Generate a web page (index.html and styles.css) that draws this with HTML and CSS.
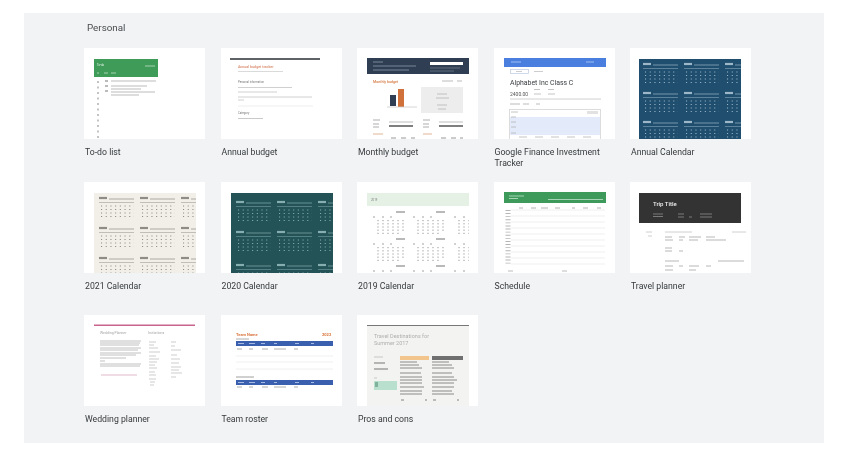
FILE: index.html
```html
<!DOCTYPE html>
<html>
<head>
    <meta charset="UTF-8">
    <title>Template gallery</title>
    <link rel="stylesheet" href="styles.css">
</head>
<body>
<svg class="defs" width="0" height="0">
    <defs>
        <g id="month" fill="none" stroke="currentColor">
            <path d="M1 2h8" stroke-width="2.200"/>
            <path d="M11 3h25" stroke-width="0.700"/>
            <path d="M1 6.500h35" stroke-width="0.500"/>
            <path d="M3 10h33M3 13.500h33M3 17h33M3 20.500h33" stroke-width="1.200" stroke-dasharray="1.100 3.600"/>
        </g>
        <g id="months" fill="none" stroke="currentColor">
            <path d="M24 0h9" stroke-width="1.200"/>
            <path d="M1 5h2M10 5h2M18 5h2" stroke-width="0.800"/>
            <path d="M6 8v15M11 8v15M16 8v15M21 8v15M26 8v15M31 8v11" stroke-width="0.900" stroke-dasharray="1.200 2"/>
        </g>
    </defs>
</svg>
<div class="panel">
    <h1>Personal</h1>
    <div class="grid">

        <!-- row 1 -->
        <div class="item">
            <div class="thumb">
                <svg viewBox="0 0 121 91">
                    <rect x="10" y="11" width="64" height="18" fill="#3f9b58"/>
                    <text x="13" y="18" class="tiny" fill="#e5f4e9">To-do</text>
                    <path d="M13 25h2M20 25h4M27 25h5M61 18h10" stroke="#cfe8d6" stroke-width="0.700" fill="none"/>
                    <path d="M14 33v58" stroke="#c4c4c4" stroke-width="2" stroke-dasharray="2 3.500" fill="none"/>
                    <path d="M21 33h3M21 38h3M21 43h3" stroke="#bbb" stroke-width="2" fill="none"/>
                    <path d="M27 33h45M27 38h36M27 41h30M27 44h44M27 47h28" stroke="#aaa" stroke-width="0.800" fill="none"/>
                </svg>
            </div>
            <div class="label">To-do list</div>
        </div>

        <div class="item">
            <div class="thumb">
                <svg viewBox="0 0 121 91">
                    <rect x="9" y="10" width="90" height="2" fill="#5f6368"/>
                    <text x="17" y="20" class="tiny title" fill="#d9886a">Annual budget tracker</text>
                    <path d="M17 23.500h45" stroke="#d0d0d0" stroke-width="0.800" fill="none"/>
                    <text x="17" y="35" class="tiny" fill="#777">Personal information</text>
                    <path d="M17 39.500h54M17 44h39M17 49h74M17 52h6" stroke="#c4c4c4" stroke-width="0.800" fill="none"/>
                    <path d="M17 58h75" stroke="#eee" fill="none"/>
                    <text x="17" y="66" class="tiny" fill="#777">Category</text>
                    <path d="M17 70.500h25" stroke="#bbb" stroke-width="0.800" fill="none"/>
                </svg>
            </div>
            <div class="label">Annual budget</div>
        </div>

        <div class="item">
            <div class="thumb">
                <svg viewBox="0 0 121 91">
                    <rect x="10" y="10" width="102" height="16" fill="#2f3e53"/>
                    <path d="M16 14h10M16 18h43M16 22h36" stroke="#8d99a9" stroke-width="0.800" fill="none"/>
                    <rect x="73" y="14" width="33" height="3" fill="#fff"/>
                    <path d="M73 20h30M73 23h24" stroke="#6d7a8c" stroke-width="0.800" fill="none"/>
                    <text x="16" y="35" class="tiny title" fill="#d47a43">Monthly budget</text>
                    <path d="M85 33h11M100 33h5" stroke="#aaa" stroke-width="0.800" fill="none"/>
                    <rect x="33" y="47" width="6" height="11" fill="#2f3e53"/>
                    <rect x="41" y="41" width="6" height="18" fill="#d0703a"/>
                    <path d="M30 59h30" stroke="#ccc" stroke-width="0.800" fill="none"/>
                    <rect x="64" y="39" width="42" height="26" fill="#ededed"/>
                    <path d="M80 46h10M79 50h13M80 57h10M81 61h8" stroke="#b5b5b5" stroke-width="0.800" fill="none"/>
                    <path d="M16 72h7M16 76h6M16 79h6M66 72h7M66 76h6M66 79h6" stroke="#999" stroke-width="0.800" fill="none"/>
                    <path d="M32 74h24M82 74h24" stroke="#d4d4d4" stroke-width="1.500" fill="none"/>
                    <path d="M32 78h24M82 78h24" stroke="#555" stroke-width="1.500" fill="none"/>
                    <path d="M16 86h10M66 86h9" stroke="#e6b595" stroke-width="1.200" fill="none"/>
                    <path d="M34 90h5M44 90h5M54 90h4M84 90h5M94 90h5M103 90h3" stroke="#999" stroke-width="1.200" fill="none"/>
                </svg>
            </div>
            <div class="label">Monthly budget</div>
        </div>

        <div class="item">
            <div class="thumb">
                <svg viewBox="0 0 121 91">
                    <rect x="10" y="10" width="102" height="9" fill="#4a7fe0"/>
                    <path d="M17 14h10M92 14h8" stroke="#b8cef5" stroke-width="0.800" fill="none"/>
                    <rect x="16.500" y="21.500" width="18" height="4" fill="#fff" stroke="#c5d0e6" stroke-width="0.800"/>
                    <path d="M22 23.500h6M40 23.500h9" stroke="#c0c0c0" stroke-width="0.800" fill="none"/>
                    <text x="16" y="37" class="name">Alphabet Inc Class C</text>
                    <text x="16" y="48" class="price">2400.00</text>
                    <path d="M40 41.500h6M54 41.500h6M40 46h7M54 46h7" stroke="#b5b5b5" stroke-width="0.800" fill="none"/>
                    <path d="M16 51h91" stroke="#c4c4c4" stroke-width="0.800" fill="none"/>
                    <path d="M16 56h10M29 56h6M42 56h4" stroke="#aaa" stroke-width="0.800" fill="none"/>
                    <rect x="15.500" y="61.500" width="91" height="30" fill="#fff" stroke="#d4d4d4" stroke-width="0.800"/>
                    <rect x="16" y="69" width="90" height="18" fill="#e3eafa"/>
                    <rect x="93" y="63" width="11" height="3" fill="#e2e2e2"/>
                    <path d="M17 64h7M17 69h5M17 74h5M17 79h5M17 85h5M25 89h8M41 89h8M57 89h8M73 89h8M89 89h8" stroke="#b5b5b5" stroke-width="0.800" fill="none"/>
                </svg>
            </div>
            <div class="label">Google Finance Investment Tracker</div>
        </div>

        <div class="item">
            <div class="thumb">
                <svg viewBox="0 0 121 91">
                    <svg class="cal-navy" x="9" y="11" width="102" height="80">
                        <rect width="102" height="80" fill="#1f4e6e"/>
                        <use href="#month" x="3" y="3"/><use href="#month" x="44" y="3"/><use href="#month" x="85" y="3"/>
                        <use href="#month" x="3" y="32"/><use href="#month" x="44" y="32"/><use href="#month" x="85" y="32"/>
                        <use href="#month" x="3" y="61"/><use href="#month" x="44" y="61"/><use href="#month" x="85" y="61"/>
                    </svg>
                </svg>
            </div>
            <div class="label">Annual Calendar</div>
        </div>

        <!-- row 2 -->
        <div class="item">
            <div class="thumb">
                <svg viewBox="0 0 121 91">
                    <svg class="cal-cream" x="10" y="11" width="102" height="80">
                        <rect width="102" height="80" fill="#f1efe8"/>
                        <use href="#month" x="4" y="3"/><use href="#month" x="45" y="3"/><use href="#month" x="86" y="3"/>
                        <use href="#month" x="4" y="33"/><use href="#month" x="45" y="33"/><use href="#month" x="86" y="33"/>
                        <use href="#month" x="4" y="63"/><use href="#month" x="45" y="63"/><use href="#month" x="86" y="63"/>
                    </svg>
                </svg>
            </div>
            <div class="label">2021 Calendar</div>
        </div>

        <div class="item">
            <div class="thumb">
                <svg viewBox="0 0 121 91">
                    <svg class="cal-teal" x="10" y="11" width="102" height="80">
                        <rect width="102" height="80" fill="#235357"/>
                        <use href="#month" x="4" y="7"/><use href="#month" x="45" y="7"/><use href="#month" x="86" y="7"/>
                        <use href="#month" x="4" y="37"/><use href="#month" x="45" y="37"/><use href="#month" x="86" y="37"/>
                        <use href="#month" x="4" y="70"/><use href="#month" x="45" y="70"/><use href="#month" x="86" y="70"/>
                    </svg>
                </svg>
            </div>
            <div class="label">2020 Calendar</div>
        </div>

        <div class="item">
            <div class="thumb">
                <svg viewBox="0 0 121 91">
                    <rect x="10" y="11" width="102" height="13" fill="#e6f1e6"/>
                    <text x="14" y="19" class="tiny" fill="#777">2019</text>
                    <svg class="cal-grey" x="10" y="24" width="102" height="67">
                        <use href="#months" x="5" y="6"/><use href="#months" x="45" y="6"/><use href="#months" x="86" y="6"/>
                        <use href="#months" x="5" y="33"/><use href="#months" x="45" y="33"/><use href="#months" x="86" y="33"/>
                        <use href="#months" x="5" y="60"/><use href="#months" x="45" y="60"/><use href="#months" x="86" y="60"/>
                    </svg>
                </svg>
            </div>
            <div class="label">2019 Calendar</div>
        </div>

        <div class="item">
            <div class="thumb">
                <svg viewBox="0 0 121 91">
                    <rect x="10" y="10" width="102" height="11" fill="#3d9a5b"/>
                    <path d="M15 14h15M15 16.500h9M54 17.500h55" stroke="#bfe3cb" stroke-width="0.800" fill="none"/>
                    <path d="M25 26h4M37 26h5M47 26h7M61 26h5M78 26h3M89 26h5M103 26h4" stroke="#aaa" stroke-width="0.900" fill="none"/>
                    <path d="M14 28v55" stroke="#b5b5b5" stroke-width="5" stroke-dasharray="0.900 2.200" fill="none"/>
                    <path d="M17 28h94M17 34h94M17 40h94M17 46h94M17 52h94M17 58h94M17 64h94M17 70h94M17 76h94M17 82h94" stroke="#ebebeb" stroke-width="0.800" fill="none"/>
                    <path d="M14 89h5M68 89h5" stroke="#aaa" stroke-width="0.800" fill="none"/>
                </svg>
            </div>
            <div class="label">Schedule</div>
        </div>

        <div class="item">
            <div class="thumb">
                <svg viewBox="0 0 121 91">
                    <rect x="9" y="11" width="102" height="30" fill="#333"/>
                    <text x="23" y="24" class="trip">Trip Title</text>
                    <path d="M23 32h10M23 34.500h10M48 32h6M48 35h6M59 35h3M70 32h12M70 35h12" stroke="#999" stroke-width="0.700" fill="none"/>
                    <path d="M16 50h6M18 54h4M35 50h27M102 50h14" stroke="#c4c4c4" stroke-width="0.800" fill="none"/>
                    <path d="M35 55h7M49 55h6M59 55h12M76 55h9M35 58h8M49 58h4M59 58h9M76 58h20M35 66h7M35 69h7M49 69h4M35 79h14M88 79h26M35 84h8M49 84h4M59 84h10M76 84h5M35 88h8M59 88h7" stroke="#a5a5a5" stroke-width="0.800" fill="none"/>
                </svg>
            </div>
            <div class="label">Travel planner</div>
        </div>

        <!-- row 3 -->
        <div class="item">
            <div class="thumb">
                <svg viewBox="0 0 121 91">
                    <rect x="10" y="9.500" width="101" height="1.500" fill="#c9648f"/>
                    <text x="16" y="19" class="tiny planner">Wedding Planner</text>
                    <text x="64" y="19" class="tiny planner">Invitations</text>
                    <path d="M16 26h41M16 28h40M16 30h39M16 33h41M16 35h38M16 38h41M16 40h36M16 43h26M16 46h5M16 49h41M16 51h40" stroke="#b0b0b0" stroke-width="0.800" fill="none"/>
                    <path d="M17 60h36" stroke="#d9a7bd" stroke-width="0.800" fill="none"/>
                    <path d="M65 27h7M65 30h5M65 33h9M65 37h11M65 41h7M65 44h10M65 47h8M65 50h6M65 53h8M65 57h6M65 60h7M65 64h7M66 67h5M66 70h4M87 27h5M87 31h4M87 35h10M87 40h6M87 44h9M87 48h8M87 52h10M87 55h8M87 58h11M87 62h5" stroke="#c0c0c0" stroke-width="0.800" fill="none"/>
                </svg>
            </div>
            <div class="label">Wedding planner</div>
        </div>

        <div class="item">
            <div class="thumb">
                <svg viewBox="0 0 121 91">
                    <text x="15" y="21" class="team">Team Name</text>
                    <text x="101" y="21" class="team">2022</text>
                    <path d="M15 24h13" stroke="#999" stroke-width="0.800" fill="none"/>
                    <rect x="15" y="26" width="97" height="5" fill="#3a5fae"/>
                    <path d="M17 28.500h6M28 28.500h6M40 28.500h4M53 28.500h3M74 28.500h4M90 28.500h3" stroke="#c4d2ee" stroke-width="0.800" fill="none"/>
                    <path d="M16 34h5M28 34h4M41 34h6M53 34h12M73 34h4M16 72h5M28 72h4M41 72h6M53 72h12M73 72h4" stroke="#999" stroke-width="0.800" fill="none"/>
                    <path d="M15 41h97M15 47h97M15 54h97" stroke="#ececec" stroke-width="0.800" fill="none"/>
                    <path d="M15 62h18" stroke="#888" stroke-width="0.800" fill="none"/>
                    <rect x="15" y="65" width="97" height="5" fill="#3a5fae"/>
                    <path d="M17 67.500h6M28 67.500h6M40 67.500h4M53 67.500h3M74 67.500h4M90 67.500h3" stroke="#c4d2ee" stroke-width="0.800" fill="none"/>
                </svg>
            </div>
            <div class="label">Team roster</div>
        </div>

        <div class="item">
            <div class="thumb">
                <svg viewBox="0 0 121 91">
                    <rect x="10" y="11" width="102" height="80" fill="#f3f3f1"/>
                    <rect x="10" y="10" width="102" height="1" fill="#777"/>
                    <text x="17" y="23" class="pros">Travel Destinations for</text>
                    <text x="17" y="30" class="pros">Summer 2017</text>
                    <path d="M17 42h9" stroke="#bbb" stroke-width="0.800" fill="none"/>
                    <path d="M17 48h11M17 54h14" stroke="#777" stroke-width="1.200" fill="none"/>
                    <path d="M17 63h3" stroke="#bbb" stroke-width="0.800" fill="none"/>
                    <rect x="17" y="66" width="23" height="9" fill="#b9e0cf"/>
                    <rect x="18" y="67" width="3" height="5" fill="#7fb29b"/>
                    <rect x="43" y="41" width="29" height="4" fill="#f2c58d"/>
                    <rect x="75" y="41" width="31" height="4" fill="#6f6f6f"/>
                    <path d="M43 47h17M43 50h19M43 53h22M43 58h21M43 62h22M43 65h22M43 68h22M43 72h24M43 76h22M43 79h22M75 47h17M75 50h20M75 53h22M75 58h20M75 62h22M75 65h25M75 68h22M75 72h22M75 76h20M75 79h22" stroke="#8a8a8a" fill="none"/>
                    <path d="M44 85h3M68 85h2M76 85h3M100 85h2" stroke="#666" stroke-width="0.800" fill="none"/>
                </svg>
            </div>
            <div class="label">Pros and cons</div>
        </div>

    </div>
</div>
</body>
</html>
```

FILE: styles.css
```css
/* page */
body {
    margin: 0;
    background-color: #fff;
    font-family: Roboto, "Liberation Sans", sans-serif;
    color: #36393c;
}
.defs {
    display: block;
    height: 0;
}
.panel {
    margin: 13px 26px 13px 24px;
    height: 430px;
    box-sizing: border-box;
    padding: 8px 0 0 60px;
    background-color: #f1f3f4;
    overflow: hidden;
}
h1 {
    margin: 0 0 14px 3px;
    height: 13px;
    font-size: 9.800px;
    line-height: 13px;
    font-weight: 400;
    color: #4a4d50;
    filter: blur(0.25px);
}

/* template cards */
.grid {
    display: grid;
    grid-template-columns: repeat(5, 121px);
    grid-auto-rows: 133.500px;
    column-gap: 15.500px;
}
.thumb {
    height: 91px;
    background-color: #fff;
    overflow: hidden;
}
.thumb > svg {
    display: block;
    width: 100%;
    height: 100%;
    filter: blur(0.45px);
}
.label {
    margin-top: 8px;
    padding-left: 1px;
    font-size: 8.700px;
    line-height: 10.500px;
    filter: blur(0.25px);
}

/* small text inside thumbnails */
.tiny { font-size: 2.800px; }
.title { font-size: 3.600px; font-weight: 500; }
.name { font-size: 6.900px; fill: #3c4043; }
.price { font-size: 5px; fill: #555; }
.trip { font-size: 6px; font-weight: 500; fill: #eee; }
.planner { font-size: 3.500px; fill: #a5a5a5; }
.team { font-size: 4px; font-weight: 700; fill: #d9763f; }
.pros { font-size: 5.500px; fill: #b0b0b0; }

/* calendar colours */
.cal-navy { color: #9db7c9; }
.cal-cream { color: #8e8c84; }
.cal-teal { color: #86aeb0; }
.cal-grey { color: #8a8a8a; }
```
